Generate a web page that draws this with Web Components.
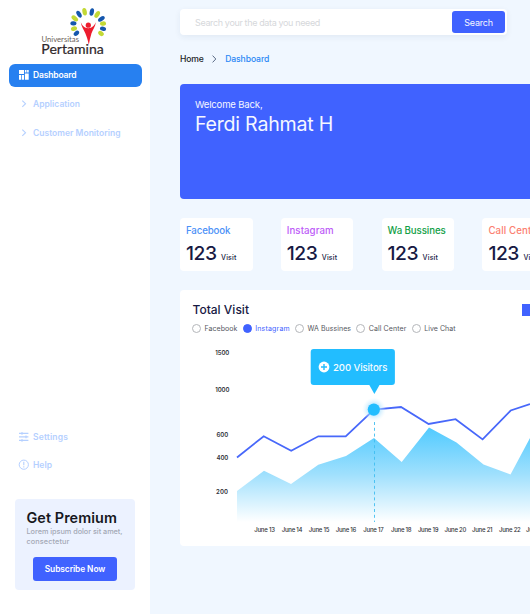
<!DOCTYPE html>
<html lang="en">
<head>
<meta charset="utf-8">
<title>Dashboard</title>
<style>
html,body{margin:0;padding:0}
body{width:530px;height:614px;overflow:hidden;font-family:Inter,"Open Sans",sans-serif;background:#f0f7ff}
</style>
</head>
<body>
<dash-app></dash-app>
<script>
const define = (name, render, after) => customElements.define(name, class extends HTMLElement {
  connectedCallback() {
    if (this.shadowRoot) return;
    const root = this.attachShadow({mode: 'open'});
    root.innerHTML = render(this);
    if (after) after(this, root);
  }
});
const attr = (e, n) => e.getAttribute(n) || '';

/* Single line label; tracking is adjusted so that it spans the width in "w". */
define('fit-text', e => `<style>
:host{display:block;flex:none;width:${attr(e,'w')}px;white-space:nowrap}
span{display:inline-block;white-space:nowrap}
</style><span>${attr(e,'text')}</span>`, (e, root) => {
  const s = root.querySelector('span');
  const n = s.textContent.length;
  s.style.letterSpacing = ((+attr(e,'w') - s.getBoundingClientRect().width) / n) + 'px';
});

define('uni-logo', () => {
  const petals = [[76.4,33.3,50,1],[74,28.6,75,0],[73.4,23.4,98,1],[74.8,18.4,128,0],[79,14.2,148,1],[84.6,11.8,168,0],
    [91.8,12,193,1],[97.2,14.4,214,0],[101.4,18.9,234,1],[103,23.6,262,0],[103,28.8,283,1],[101,33.4,308,0]];
  return `<style>:host{display:block;height:63px}svg{display:block}</style>
<svg width="150" height="63">
${petals.map(([x,y,r,b])=>`<ellipse cx="${x}" cy="${y}" rx="${b?2.1:2.2}" ry="${y<20?3.8:3.1}" transform="rotate(${r} ${x} ${y})" fill="${b?'#1557ad':'#c3d935'}"/>`).join('')}
<circle cx="88.3" cy="25.2" r="2.6" fill="#ed1c2e"/>
<path d="M80.8 22.3C82.5 26 84.5 28.2 88.3 28.3C92 28.2 94 26 95.9 22.3C95.2 27 92.7 30 91.5 33.3C90.4 37 89.4 41 88.8 45C88 40.6 86.8 36.6 85.3 33.2C83.9 29.8 81.5 27 80.8 22.3Z" fill="#ed1c2e"/>
<text x="41.5" y="42.2" font-family="Lato" font-size="7.4" textLength="37.5" lengthAdjust="spacingAndGlyphs" fill="#6c5f5a">Universitas</text>
<text x="41.3" y="54.3" font-family="Lato" font-size="13.2" textLength="62.5" lengthAdjust="spacingAndGlyphs" fill="#30282a" stroke="#30282a" stroke-width=".2">Pertamina</text>
</svg>`;
});

const icons = {
  dash: '<path d="M1 1h5v4H1zM6.9 1h1.6v2.6H6.9zM9.1 1h1.6v2.6H9.1zM1 5.9h2v4.8H1zM3.7 5.9h2.3v4.8H3.7zM6.9 4.6h3.8v6.1H6.9z" fill="currentColor"/>',
  chev: '<path d="M4.3 2.6L7.5 5.7L4.3 8.8" fill="none" stroke="currentColor" stroke-width="1.1"/>',
  settings: '<path d="M1 2.4h9.4M1 5.9h9.4M1 9.4h9.4M4 1v2.8M8 4.5v2.8M4 8v2.8" fill="none" stroke="currentColor" stroke-width="1.1"/>',
  help: '<circle cx="5.8" cy="5.7" r="4.6" fill="none" stroke="currentColor" stroke-width="1"/><path d="M5.8 2.8v3.5M5.8 7.3v1.2" stroke="currentColor" stroke-width="1.1"/>'
};
define('nav-item', e => `<style>
:host{display:flex;align-items:center;box-sizing:border-box;height:23.5px;margin:0 8.5px;padding-left:9px;gap:3.5px;border-radius:6px;color:#b5d0ff;font-size:8.5px;font-weight:600}
:host([active]){background:#2780f0;color:#fff}
svg{width:12px;height:12px;flex:none}
</style><svg viewBox="0 0 12 12">${icons[attr(e,'icon')]}</svg><fit-text w="${attr(e,'w')}" text="${attr(e,'text')}"></fit-text>`);

define('promo-card', () => `<style>
:host{display:block;box-sizing:border-box;margin:22px 15px 0;height:91px;padding:10.5px 11.5px 0;background:#ecf2ff;border-radius:4px}
.t{font-size:14.4px;line-height:18px;font-weight:600;color:#17181e}
.s{font-size:7.3px;line-height:9.5px;font-weight:500;color:#a4a9b6}
.b{display:flex;align-items:center;justify-content:center;width:84px;height:24px;margin:10.5px 0 0 6.5px;border-radius:3px;background:#4062ff;color:#fff;font-size:8.4px;font-weight:600}
</style><fit-text class="t" w="90.5" text="Get Premium"></fit-text>
<fit-text class="s" w="96" text="Lorem ipsum dolor sit amet,"></fit-text><fit-text class="s" w="43" text="consectetur"></fit-text>
<div class="b"><fit-text w="60.5" text="Subscribe Now"></fit-text></div>`);

define('side-bar', () => `<style>
:host{display:flex;flex-direction:column;width:150px;height:614px;background:#fff;flex:none}
.n{display:flex;flex-direction:column;gap:5px;margin-top:.5px}.n nav-item:nth-child(3){margin-top:.5px}
.f{display:flex;flex-direction:column;gap:4px;margin-top:281px}
</style><uni-logo></uni-logo>
<div class="n"><nav-item active icon="dash" w="43.5" text="Dashboard"></nav-item>
<nav-item icon="chev" w="47" text="Application"></nav-item>
<nav-item icon="chev" w="87.5" text="Customer Monitoring"></nav-item></div>
<div class="f"><nav-item icon="settings" w="35" text="Settings"></nav-item>
<nav-item icon="help" w="19" text="Help"></nav-item></div>
<promo-card></promo-card>`);

define('search-bar', () => `<style>
:host{display:flex;align-items:center;justify-content:space-between;box-sizing:border-box;width:327px;height:26px;padding:0 2px 0 15px;background:#fff;border-radius:4px;box-shadow:0 2px 6px #1f3b6612;font-size:9px;color:#d6d8db}
.b{display:flex;align-items:center;justify-content:center;width:53px;height:21.5px;border-radius:3px;background:#4062ff;color:#f4f6ff;font-weight:400}
</style><fit-text w="125" text="Search your the data you neeed"></fit-text><div class="b"><fit-text w="28.5" text="Search"></fit-text></div>`);

define('bread-crumb', () => `<style>
:host{display:flex;align-items:center;height:12px;margin-top:18px;font-size:8.6px;font-weight:500;color:#1c1f27}
svg{margin:0 7px 0 6.5px}.l{color:#2a87f5}
</style><fit-text w="23.7" text="Home"></fit-text><svg width="8" height="10"><path d="M2.6 1.6L5.8 5L2.6 8.4" fill="none" stroke="#5b6b86"/></svg><fit-text class="l" w="44" text="Dashboard"></fit-text>`);

define('welcome-banner', () => `<style>
:host{display:block;box-sizing:border-box;width:400px;height:115.5px;margin-top:18.5px;padding:14.5px 15px;background:#4062ff;border-radius:4px;color:#f5f7ff}
.a{font-size:9.6px;line-height:13px}.b{font-size:19.6px;line-height:26px}
</style><fit-text class="a" w="67.5" text="Welcome Back,"></fit-text><fit-text class="b" w="138" text="Ferdi Rahmat H"></fit-text>`);

define('stat-card', e => `<style>
:host{display:block;box-sizing:border-box;flex:none;width:72.5px;height:53px;padding:6px;background:#fff;border-radius:4px;color:#171943}
.l{font-size:9.7px;line-height:14px;font-weight:500;color:${attr(e,'tone')}}
.r{display:flex;align-items:baseline;gap:4.5px;margin-top:3px}
.n{font-size:19.3px;line-height:24px;font-weight:500}.v{font-size:7px;font-weight:500}
</style><fit-text class="l" w="${attr(e,'w')}" text="${attr(e,'text')}"></fit-text>
<div class="r"><fit-text class="n" w="30.5" text="123"></fit-text><fit-text class="v" w="15.5" text="Visit"></fit-text></div>`);

define('radio-item', e => `<style>
:host{display:flex;align-items:center;gap:3.5px;font-size:7px;color:#55575e}
:host([on]){color:#4062ff}
i{box-sizing:border-box;width:9px;height:9px;border-radius:50%;border:1px solid #b4b6ba;flex:none}
:host([on]) i{background:#4062ff;border-color:#4062ff}
</style><i></i><fit-text w="${attr(e,'w')}" text="${attr(e,'text')}"></fit-text>`);

define('visit-chart', () => {
  const ys = [['1500',215.3,14,352.7],['1000',215.2,14.3,390.2],['600',216.5,11.8,434.6],['400',216.5,11.8,457.8],['200',216,12,491.5]];
  const xs = [254.3,281.8,308.8,335.8,363.2,391,417.9,444.5,472,499,526];
  return `<style>:host{display:block}svg{display:block}text{font-weight:500;fill:#303238;font-size:6px}</style>
<svg width="350" height="206" viewBox="180 340 350 206">
<defs><linearGradient id="g" gradientUnits="userSpaceOnUse" x1="0" y1="427" x2="0" y2="522"><stop offset="0" stop-color="#50caff"/><stop offset=".5" stop-color="#a0e0fd"/><stop offset="1" stop-color="#fff"/></linearGradient>
<radialGradient id="h"><stop offset=".4" stop-color="#9fdcff" stop-opacity=".75"/><stop offset="1" stop-color="#d9f2ff" stop-opacity="0"/></radialGradient></defs>
<path d="M237 491L264 470.8L291 484L318.3 464.8L346 456L374 438L401.7 462L429 427.4L456.5 442.5L483.5 464.5L510.5 474.5L530 438L558 420V522H237Z" fill="url(#g)"/>
<path d="M237 457.5L263.7 436.2L291.2 450.8L318.3 436.3H345.7L374 409.7L401 407L428.6 424L455.6 419.2L482.6 439.4L510.7 410.5L530 404" fill="none" stroke="#4868fa" stroke-width="1.8"/>
<path d="M374.5 422V522" stroke="#3fbdf0" stroke-width=".9" stroke-dasharray="3 2.8"/>
<circle cx="374" cy="409.5" r="12" fill="url(#h)"/><circle cx="373.8" cy="409.6" r="6.1" fill="#22bdff"/>
<rect x="310.7" y="349" width="84.2" height="36" rx="3" fill="#22bdff"/><path d="M369 384.5H379.8L374.4 394Z" fill="#22bdff"/>
<circle cx="324" cy="367" r="5.4" fill="#fff"/><path d="M321 367H327M324 364V370" stroke="#22bdff" stroke-width="1.4"/>
<text x="333" y="370.6" textLength="54.4" style="font-size:9.6px;fill:#f5fcff">200 Visitors</text>
${ys.map(([t,x,w,y])=>`<text x="${x}" y="${y+2.2}" textLength="${w}" style="font-weight:600">${t}</text>`).join('')}
${xs.map((x,i)=>`<text x="${x}" y="532.2" textLength="${i>6&&i!=8?21.8:20.6}">June ${13+i}</text>`).join('')}
</svg>`;
});

define('visit-panel', () => `<style>
:host{display:flex;flex-direction:column;width:400px;height:255.5px;margin-top:19px;background:#fff;border-radius:4px;overflow:hidden}
.h{display:flex;height:13px;margin:13.5px 0 0 12.5px;align-items:center;color:#171943;font-size:12px;font-weight:500}
.h fit-text{margin-top:-1px}
.h i{width:58px;height:12.5px;background:#4062ff;margin-left:272.8px;flex:none}
.r{display:flex;gap:5.2px;height:10px;margin:7px 0 6.5px 12px}
</style><div class="h"><fit-text w="56.5" text="Total Visit"></fit-text><i></i></div>
<div class="r"><radio-item w="33" text="Facebook"></radio-item><radio-item on w="34.7" text="Instagram"></radio-item><radio-item w="43.5" text="WA Bussines"></radio-item><radio-item w="37.7" text="Call Center"></radio-item><radio-item w="31.5" text="Live Chat"></radio-item></div>
<visit-chart></visit-chart>`);

define('dash-app', () => `<style>
:host{display:flex;width:530px;height:614px;overflow:hidden}
main{box-sizing:border-box;width:380px;padding:9px 0 0 30px;overflow:hidden}
.c{display:flex;gap:28.3px;margin-top:19px}
</style><side-bar></side-bar><main><search-bar></search-bar><bread-crumb></bread-crumb><welcome-banner></welcome-banner>
<div class="c"><stat-card tone="#4c91f7" w="44.3" text="Facebook"></stat-card><stat-card tone="#bd5bf8" w="46.8" text="Instagram"></stat-card><stat-card tone="#12a047" w="58" text="Wa Bussines"></stat-card><stat-card tone="#fc8070" w="52.5" text="Call Center"></stat-card></div>
<visit-panel></visit-panel></main>`);
</script>
</body>
</html>
